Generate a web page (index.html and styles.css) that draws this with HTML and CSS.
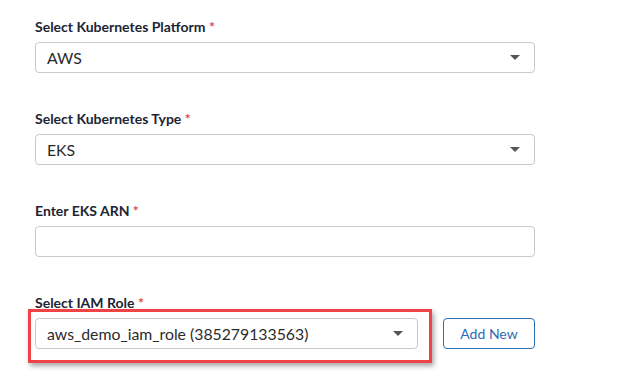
FILE: index.html
```html
<!DOCTYPE html>
<html>
<head>
<meta charset="utf-8">
<link rel="stylesheet" href="styles.css">
</head>
<body>
<div class="form">
  <div class="field">
    <div class="label">Select Kubernetes Platform <span class="req">*</span></div>
    <div class="select"><span class="value">AWS</span><span class="caret"></span></div>
  </div>
  <div class="field">
    <div class="label">Select Kubernetes Type <span class="req">*</span></div>
    <div class="select"><span class="value">EKS</span><span class="caret"></span></div>
  </div>
  <div class="field">
    <div class="label">Enter EKS ARN <span class="req">*</span></div>
    <div class="input"></div>
  </div>
  <div class="field">
    <div class="label">Select IAM Role <span class="req">*</span></div>
    <div class="row">
      <div class="highlight-wrap">
        <div class="select short"><span class="value">aws_demo_iam_role (385279133563)</span><span class="caret"></span></div>
        <div class="highlight"></div>
      </div>
      <button class="btn">Add New</button>
    </div>
  </div>
</div>
</body>
</html>
```
FILE: styles.css
```css
* { box-sizing: border-box; }
html, body {
  height: 100%;
}
body {
  margin: 0;
  min-height: 376px;
  background: #fff;
  font-family: Lato, "Open Sans", sans-serif;
  color: #222;
}
.form {
  padding: 18px 0 27px 35px;
  display: flex;
  flex-direction: column;
  gap: 37px;
}
.field {
  display: flex;
  flex-direction: column;
  gap: 7px;
}
.label {
  font-size: 14px;
  font-weight: 700;
  line-height: 17px;
  color: #1c2533;
}
.req {
  color: #e5484d;
  font-weight: 700;
}
.select, .input {
  width: 500px;
  height: 31px;
  border: 1px solid #c9c9c9;
  border-radius: 4px;
  display: flex;
  align-items: center;
  justify-content: space-between;
  padding: 0 14px 0 11px;
  background: #fff;
}
.value {
  font-size: 15.8px;
  color: #2b2b2b;
}
.caret {
  width: 0;
  height: 0;
  border-left: 5px solid transparent;
  border-right: 5px solid transparent;
  border-top: 5px solid #555;
}
.row {
  display: flex;
  align-items: flex-start;
  gap: 25px;
}
.highlight-wrap {
  position: relative;
}
.select.short {
  width: 383px;
}
.highlight {
  position: absolute;
  left: -7px;
  top: -9px;
  right: -14px;
  bottom: -14px;
  border: 3px solid #ef4347;
  box-shadow: 2px 3px 5px rgba(0,0,0,0.35);
  pointer-events: none;
}
.btn {
  width: 92px;
  height: 31px;
  border: 1px solid #2c6db3;
  border-radius: 4px;
  background: #fff;
  color: #2c6db3;
  font-family: Lato, "Open Sans", sans-serif;
  font-size: 14px;
  padding: 0;
}
```
